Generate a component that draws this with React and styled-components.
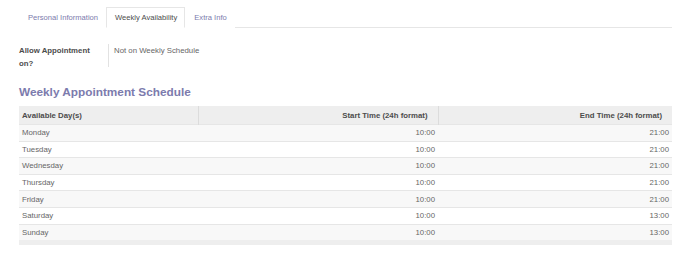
import React from 'react';
import styled, { createGlobalStyle } from 'styled-components';

const GlobalStyle = createGlobalStyle`
    body {
        margin: 0;
        background: #ffffff;
        font-family: "Liberation Sans", Arial, sans-serif;
    }
`;

const Page = styled.div`
    padding: 7px 18px 0 19px;
    font-size: 7.8px;
    color: #666666;
`;

const TabBar = styled.div`
    display: flex;
    height: 20px;
    border-bottom: 1px solid #e6e6e6;
`;

const Tab = styled.div`
    display: flex;
    align-items: center;
    font-size: 7.6px;
    padding: 0 ${p => (p.active ? 7 : 7)}px 0 ${p => (p.active ? 8 : 8)}px;
    margin-bottom: -1px;
    color: ${p => (p.active ? '#4c4c4c' : '#7c7bad')};
    background: #ffffff;
    border: 1px solid ${p => (p.active ? '#e6e6e6' : 'transparent')};
    border-bottom-color: ${p => (p.active ? '#ffffff' : 'transparent')};
`;

const FieldRow = styled.div`
    display: grid;
    grid-template-columns: 90px 1fr;
    margin-top: 16px;
`;

const Label = styled.div`
    font-weight: bold;
    color: #4c4c4c;
    line-height: 12.5px;
    padding-top: 1px;
    border-right: 1px solid #e2e2e2;
    height: 22px;
`;

const Value = styled.div`
    padding: 1px 0 0 5px;
    line-height: 12.5px;
`;

const Title = styled.h2`
    margin: 18px 0 0;
    font-size: 11.8px;
    line-height: 14px;
    font-weight: bold;
    color: #7c7bad;
`;

const Table = styled.table`
    width: 100%;
    margin-top: 7px;
    border-collapse: collapse;
    table-layout: fixed;
`;

const Th = styled.th`
    height: 18px;
    padding: 0 ${p => (p.right ? 10 : 3)}px 0 3px;
    background: #eeeeee;
    color: #4c4c4c;
    font-weight: bold;
    text-align: ${p => (p.right ? 'right' : 'left')};
    border-left: ${p => (p.first ? 'none' : '1px solid #dcdcdc')};
`;

const Tr = styled.tr`
    background: ${p => (p.striped ? '#f8f8f8' : '#ffffff')};
    border-top: 1px solid #e6e6e6;
`;

const Td = styled.td`
    height: 15.6px;
    padding: 0 3px;
    text-align: ${p => (p.right ? 'right' : 'left')};
`;

const Foot = styled.td`
    height: 5px;
    padding: 0;
    background: #eeeeee;
`;

const schedule = [
    ['Monday', '10:00', '21:00'],
    ['Tuesday', '10:00', '21:00'],
    ['Wednesday', '10:00', '21:00'],
    ['Thursday', '10:00', '21:00'],
    ['Friday', '10:00', '21:00'],
    ['Saturday', '10:00', '13:00'],
    ['Sunday', '10:00', '13:00'],
];

export default function App() {
    return (
        <Page>
            <GlobalStyle />
            <TabBar>
                <Tab>Personal Information</Tab>
                <Tab active>Weekly Availability</Tab>
                <Tab>Extra Info</Tab>
            </TabBar>
            <FieldRow>
                <Label>Allow Appointment<br />on?</Label>
                <Value>Not on Weekly Schedule</Value>
            </FieldRow>
            <Title>Weekly Appointment Schedule</Title>
            <Table>
                <colgroup>
                    <col style={{ width: '179px' }} />
                    <col style={{ width: '240px' }} />
                    <col />
                </colgroup>
                <thead>
                    <tr>
                        <Th first>Available Day(s)</Th>
                        <Th right>Start Time (24h format)</Th>
                        <Th right>End Time (24h format)</Th>
                    </tr>
                </thead>
                <tbody>
                    {schedule.map(([day, start, end], i) => (
                        <Tr key={day} striped={i % 2 === 0}>
                            <Td>{day}</Td>
                            <Td right>{start}</Td>
                            <Td right>{end}</Td>
                        </Tr>
                    ))}
                </tbody>
                <tfoot>
                    <tr>
                        <Foot colSpan={3} />
                    </tr>
                </tfoot>
            </Table>
        </Page>
    );
}
